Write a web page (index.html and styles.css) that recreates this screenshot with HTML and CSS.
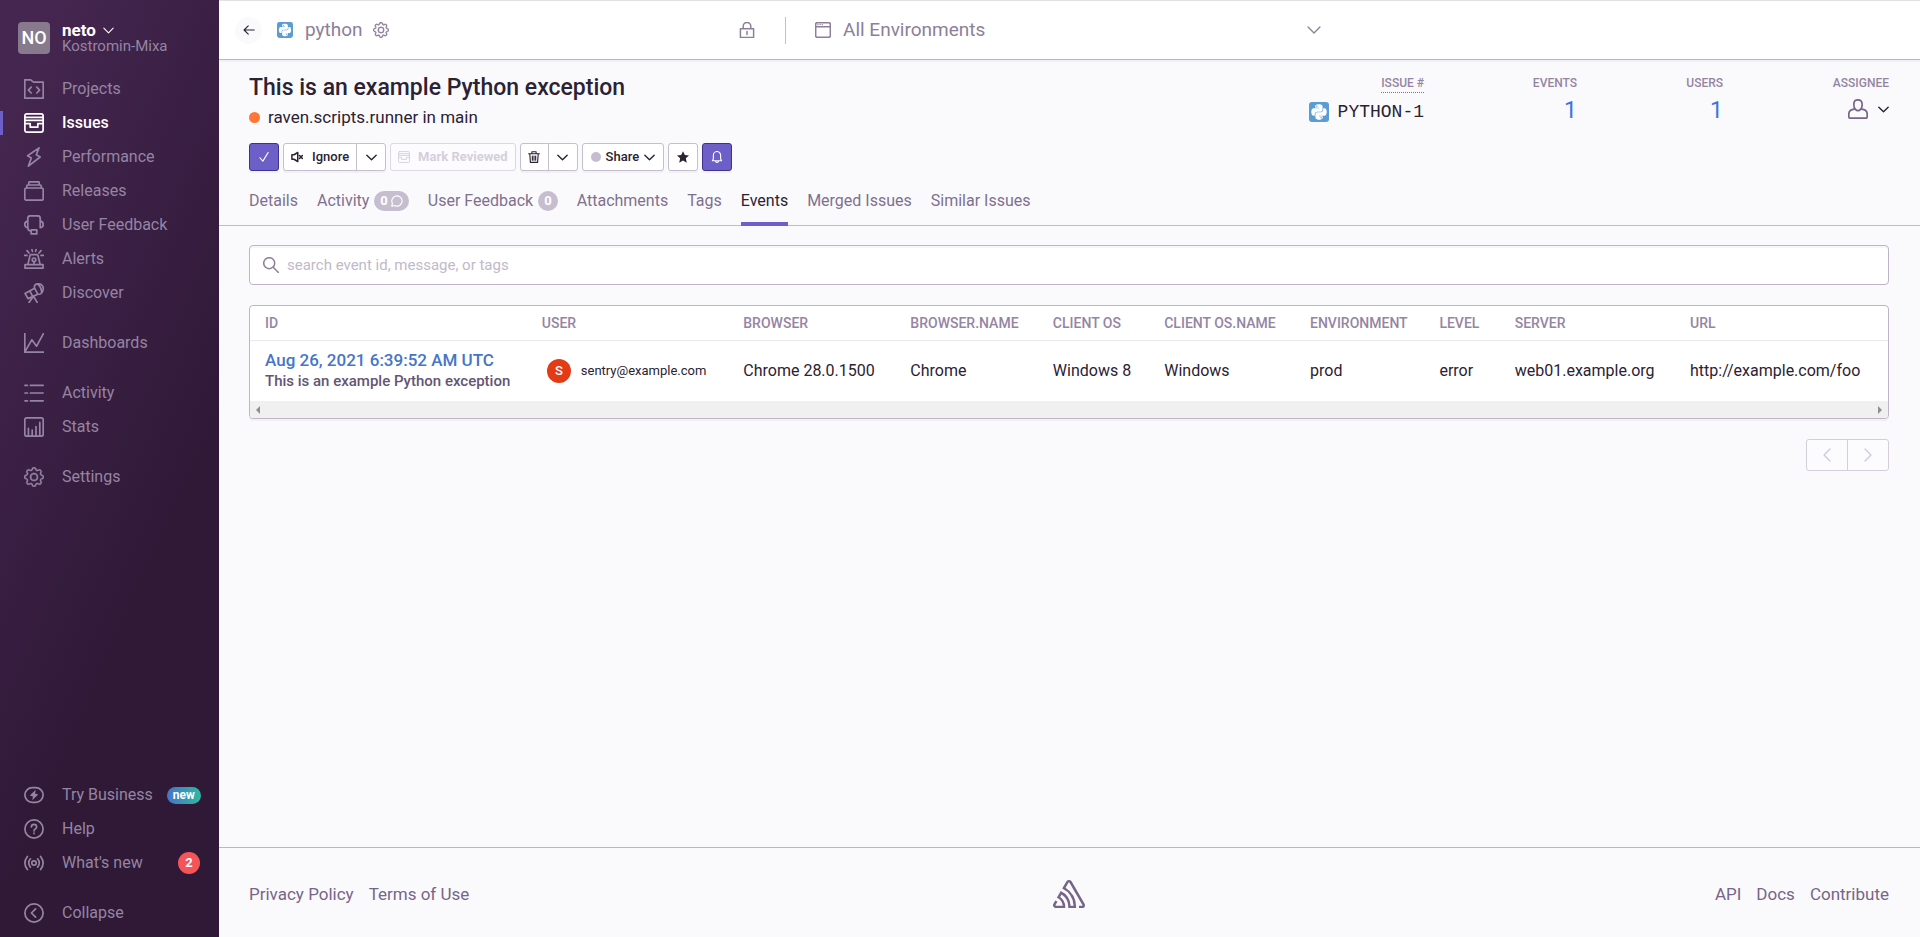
FILE: index.html
```html
<!DOCTYPE html>
<html lang="en">
<head>
<meta charset="utf-8">
<title>This is an example Python exception</title>
<link rel="stylesheet" href="styles.css">
</head>
<body>
<svg class="sprite" aria-hidden="true">
  <symbol id="i-chevron" viewBox="0 0 16 16"><path d="M1.200 4.600L8 11.400l6.800-6.800"/></symbol>
  <symbol id="i-projects" viewBox="0 0 20 20"><path d="M.8 19.2V.8h5.8l3 2.4h9.6v16zM7.2 8.2l-2.8 2.9 2.8 2.9M12.8 8.2l2.8 2.9-2.8 2.9"/></symbol>
  <symbol id="i-issues" viewBox="0 0 20 20"><rect x=".9" y=".9" width="18.2" height="18.2" rx="2"/><path d="M1 4.4h18M1 7.4h18M1 10.6h5.2v3.6h7.6v-3.6H19"/></symbol>
  <symbol id="i-bolt" viewBox="0 0 20 20"><path d="M15 .9L3.6 8.8l3.7 2.2-2.9 8.1L16.2 10l-3.9-2.2z"/></symbol>
  <symbol id="i-releases" viewBox="0 0 20 20"><rect x=".8" y="7" width="18.4" height="12.2" rx="1.5"/><path d="M2.8 7V4.8q0-.8.8-.8h12.8q.8 0 .8.8V7M4.8 4V1.6q0-.8.8-.8h8.8q.8 0 .8.8V4"/></symbol>
  <symbol id="i-headset" viewBox="0 0 20 20"><path d="M3.8 12.6V3.3Q3.8.8 6.3.8h7.4q2.5 0 2.5 2.5v9.3M3.8 6.2Q.8 6.4.8 9.4t3 3.2zM16.2 6.2q3 .2 3 3.2t-3 3.2zM3.800 12.600q0 3.400 3.200 3.400M7.200 14.900h5.600v4H7.200z"/></symbol>
  <symbol id="i-siren" viewBox="0 0 20 20"><path d="M1 19.2v-3.6h18v3.6zM3.8 15.6L6 6.6q.2-1 1-1h6q.8 0 1 1l2.2 9M0 6.4h3M17 6.4h3M3 1.6l2 2.4M17 1.6L15 4M7.8 0l.6 2.4M12.2 0l-.6 2.4"/><circle cx="10" cy="10.8" r="1.8"/><path d="M10 12.6v3"/></symbol>
  <symbol id="i-scope" viewBox="0 0 20 20"><path d="M1 10.400l9.600-5.200 3.200 6-9.800 4.400zM10.600 5.200q-.8-2 .8-3.600Q14 .2 17 1.400q2.600 1.400 2.200 5-.6 3.600-3 4.600-1.600.4-2.400.2M13.600 1q3.400 2.400 4.200 8.400M9.400 13.200L5 19.400M9.400 13.200l3.800 6.200M5.800 7.800l3 5.800"/></symbol>
  <symbol id="i-graph" viewBox="0 0 20 20"><path d="M.8 0v19.2H20M1 18.6L7.8 6.8l4.8 6.4L19.4.6"/></symbol>
  <symbol id="i-list" viewBox="0 0 20 20"><path d="M1 2.4h2.400M6.400 2.400h12.800M1 10h2.400M6.400 10h12.800M1 17.800h2.400M6.400 17.800h12.800"/></symbol>
  <symbol id="i-stats" viewBox="0 0 20 20"><rect x=".8" y=".8" width="18.4" height="18.4" rx="2"/><path d="M4.4 11.4V19M8.2 13V19M12 9.6V19M15.8 5.4V19"/></symbol>
  <symbol id="i-gear" viewBox="0 0 16 16"><path d="M8 4.754a3.246 3.246 0 1 0 0 6.492 3.246 3.246 0 0 0 0-6.492zM5.754 8a2.246 2.246 0 1 1 4.492 0 2.246 2.246 0 0 1-4.492 0z"/><path d="M9.796 1.343c-.527-1.79-3.065-1.79-3.592 0l-.094.319a.873.873 0 0 1-1.255.52l-.292-.16c-1.64-.892-3.433.902-2.54 2.541l.159.292a.873.873 0 0 1-.52 1.255l-.319.094c-1.79.527-1.79 3.065 0 3.592l.319.094a.873.873 0 0 1 .52 1.255l-.16.292c-.892 1.64.901 3.434 2.541 2.54l.292-.159a.873.873 0 0 1 1.255.52l.094.319c.527 1.79 3.065 1.79 3.592 0l.094-.319a.873.873 0 0 1 1.255-.52l.292.16c1.64.893 3.434-.902 2.54-2.541l-.159-.292a.873.873 0 0 1 .52-1.255l.319-.094c1.79-.527 1.79-3.065 0-3.592l-.319-.094a.873.873 0 0 1-.52-1.255l.16-.292c.893-1.64-.902-3.433-2.541-2.54l-.292.159a.873.873 0 0 1-1.255-.52l-.094-.319zm-2.633.283c.246-.835 1.428-.835 1.674 0l.094.319a1.873 1.873 0 0 0 2.693 1.115l.291-.16c.764-.415 1.6.42 1.184 1.185l-.159.292a1.873 1.873 0 0 0 1.116 2.692l.318.094c.835.246.835 1.428 0 1.674l-.319.094a1.873 1.873 0 0 0-1.115 2.693l.16.291c.415.764-.42 1.6-1.185 1.184l-.291-.159a1.873 1.873 0 0 0-2.693 1.116l-.094.318c-.246.835-1.428.835-1.674 0l-.094-.319a1.873 1.873 0 0 0-2.692-1.115l-.292.16c-.764.415-1.6-.42-1.184-1.185l.159-.291A1.873 1.873 0 0 0 1.945 8.93l-.319-.094c-.835-.246-.835-1.428 0-1.674l.319-.094A1.873 1.873 0 0 0 3.06 4.377l-.16-.292c-.415-.764.42-1.6 1.185-1.184l.292.159a1.873 1.873 0 0 0 2.692-1.115l.094-.319z"/></symbol>
  <symbol id="i-business" viewBox="0 0 20 20"><rect x=".9" y="2.7" width="18.2" height="14.6" rx="7.3"/><path class="solid" d="M11.8 4.8L5.8 10.6l3.2.8-.8 3.8 6-5.8-3.2-.8z"/></symbol>
  <symbol id="i-help" viewBox="0 0 20 20"><circle cx="10" cy="10" r="9.1"/><path d="M7.400 8q0-2.600 2.600-2.600T12.600 8q0 1.300-1.300 2Q10 10.700 10 12M10 14.200v.4"/></symbol>
  <symbol id="i-broadcast" viewBox="0 0 20 20"><circle cx="10" cy="10" r="2.200"/><path d="M6.400 5.800q-3.400 4.200 0 8.400M13.600 5.800q3.400 4.200 0 8.400M3.400 3.400q-5 6.600 0 13.200M16.600 3.400q5 6.600 0 13.200"/></symbol>
  <symbol id="i-collapse" viewBox="0 0 20 20"><circle cx="10" cy="10" r="9.1"/><path d="M11.600 5.800L7.400 10l4.200 4.200"/></symbol>
  <symbol id="i-back" viewBox="0 0 16 16"><path d="M15 8H1.500M7 2.400L1.400 8 7 13.600"/></symbol>
  <symbol id="i-python" viewBox="0 0 20 20"><rect class="py-bg" width="20" height="20" rx="3"/><path class="py-fg" transform="translate(2.300 1.200) scale(.0344)" d="M439.800 200.500c-7.700-30.900-22.300-54.200-53.400-54.200h-40.100v47.400c0 36.800-31.200 67.800-66.800 67.800H172.700c-29.200 0-53.400 25-53.400 54.300v101.800c0 29 25.200 46 53.400 54.300 33.800 9.900 66.300 11.700 106.800 0 26.900-7.800 53.400-23.500 53.400-54.300v-40.700H226.200v-13.600h160.200c31.100 0 42.600-21.700 53.400-54.200 11.200-33.500 10.700-65.700 0-108.600zM286.200 404c11.100 0 20.100 9.100 20.100 20.300 0 11.300-9 20.400-20.100 20.400-11 0-20.100-9.200-20.100-20.400.1-11.300 9.100-20.300 20.100-20.300zM167.800 248.100h106.800c29.700 0 53.400-24.500 53.400-54.300V91.900c0-29-24.400-50.700-53.400-55.600-35.800-5.900-74.700-5.600-106.800.1-45.200 8-53.400 24.700-53.400 55.600v40.700h106.900v13.600h-147c-31.100 0-58.300 18.700-66.800 54.200-9.800 40.700-10.200 66.100 0 108.600 7.600 31.600 25.700 54.200 56.800 54.200H101v-48.800c0-35.300 30.500-66.400 66.800-66.400zm-6.700-142.600c-11.100 0-20.100-9.100-20.100-20.300.1-11.300 9-20.400 20.100-20.400 11 0 20.100 9.200 20.100 20.400s-9 20.300-20.100 20.300z"/></symbol>
  <symbol id="i-lock" viewBox="0 0 16 16"><path d="M1.400 6.800h13.200v8.600H1.400zM4.200 6.800V4.200a3.800 3.800 0 0 1 7.600 0v2.600M8 9.400v3"/></symbol>
  <symbol id="i-window" viewBox="0 0 16 16"><rect x=".7" y=".7" width="14.600" height="14.600" rx="1.500"/><path d="M.8 4.700h14.400"/><path class="dots" d="M2.600 2.700h.6M4.800 2.700h.6M7 2.700h.6"/></symbol>
  <symbol id="i-check" viewBox="0 0 16 16"><path d="M2.500 9l4 4.500 7-11.500"/></symbol>
  <symbol id="i-mute" viewBox="0 0 16 16"><path d="M4 5H1.200v6H4l5 3V2zM11.400 6l3.800 4M15.200 6l-3.800 4"/></symbol>
  <symbol id="i-trash" viewBox="0 0 16 16"><path d="M.8 3.600h14.400M5.200 3.400V1h5.600v2.400M2.400 3.600l.8 11.600h9.600l.8-11.600M5.800 6.600v5.800M8 6.600v5.800M10.200 6.600v5.800"/></symbol>
  <symbol id="i-star" viewBox="0 0 16 16"><path d="M8 .2l2.400 5.200 5.600.6-4.200 3.800 1.200 5.800-5-2.900-5 2.900 1.200-5.800L0 6l5.600-.6z"/></symbol>
  <symbol id="i-bell" viewBox="0 0 16 16"><path d="M1.800 13h12.400q-1.400-1.600-1.400-3.400V5.500a4.800 4.800 0 0 0-9.600 0v4.100q0 1.800-1.400 3.400zM6 13.200a2 2 0 0 0 4 0"/></symbol>
  <symbol id="i-bubble" viewBox="0 0 16 16"><path d="M8 1.200a6.800 6.800 0 1 1-3.200 12.800L1 15l.9-3.800A6.800 6.800 0 0 1 8 1.200z"/></symbol>
  <symbol id="i-user" viewBox="0 0 20 20"><path d="M7.500 10.400Q5.800 9 5.800 5.500 5.800.8 10 .8t4.200 4.700q0 3.500-1.700 4.900-1 1.200-2.500 1.200t-2.500-1.200zM6.400 10.200Q.8 10.800.8 15v2.700q0 1.500 1.500 1.500h15.400q1.500 0 1.500-1.500V15q0-4.200-5.600-4.800"/></symbol>
  <symbol id="i-search" viewBox="0 0 16 16"><circle cx="6.200" cy="6.200" r="5.500"/><path d="M10.200 10.200l5.300 5.300"/></symbol>
  <symbol id="i-sentry" viewBox="0 0 50 44"><path d="M29,2.260a4.670,4.670,0,0,0-8,0L14.420,13.530A32.210,32.210,0,0,1,32.170,40.190H27.550A27.680,27.680,0,0,0,12.090,17.470L6,28a15.920,15.920,0,0,1,9.230,12.170H4.620A.76.76,0,0,1,4,39.060l2.940-5a10.740,10.740,0,0,0-3.360-1.900l-2.910,5a4.540,4.540,0,0,0,1.690,6.240A4.660,4.660,0,0,0,4.620,44H19.150a19.400,19.400,0,0,0-8-17.310l2.310-4A23.870,23.870,0,0,1,23.760,44H36.070a35.880,35.880,0,0,0-16.410-31.800l4.670-8a.77.77,0,0,1,1.050-.27c.53.29,20.290,34.770,20.660,35.170a.76.76,0,0,1-.68,1.130H40.600q.09,1.910,0,3.810h4.780A4.590,4.590,0,0,0,50,39.430a4.490,4.490,0,0,0-.62-2.280Z"/></symbol>
</svg>

<div class="app">
  <aside class="sidebar">
    <button class="org" type="button">
      <span class="org-avatar">NO</span>
      <span class="org-text">
        <span class="org-name">neto <svg class="ico ico-10"><use href="#i-chevron"/></svg></span>
        <span class="org-user">Kostromin-Mixa</span>
      </span>
    </button>
    <nav class="nav">
      <a class="nav-item" href="#"><svg class="ico ico-20"><use href="#i-projects"/></svg>Projects</a>
      <a class="nav-item active" href="#"><svg class="ico ico-20"><use href="#i-issues"/></svg>Issues</a>
      <a class="nav-item" href="#"><svg class="ico ico-20"><use href="#i-bolt"/></svg>Performance</a>
      <a class="nav-item" href="#"><svg class="ico ico-20"><use href="#i-releases"/></svg>Releases</a>
      <a class="nav-item" href="#"><svg class="ico ico-20"><use href="#i-headset"/></svg>User Feedback</a>
      <a class="nav-item" href="#"><svg class="ico ico-20"><use href="#i-siren"/></svg>Alerts</a>
      <a class="nav-item" href="#"><svg class="ico ico-20"><use href="#i-scope"/></svg>Discover</a>
    </nav>
    <nav class="nav">
      <a class="nav-item" href="#"><svg class="ico ico-20"><use href="#i-graph"/></svg>Dashboards</a>
    </nav>
    <nav class="nav">
      <a class="nav-item" href="#"><svg class="ico ico-20"><use href="#i-list"/></svg>Activity</a>
      <a class="nav-item" href="#"><svg class="ico ico-20"><use href="#i-stats"/></svg>Stats</a>
    </nav>
    <nav class="nav">
      <a class="nav-item" href="#"><svg class="ico ico-20 gear"><use href="#i-gear"/></svg>Settings</a>
    </nav>
    <nav class="nav nav-bottom">
      <a class="nav-item" href="#"><svg class="ico ico-20"><use href="#i-business"/></svg>Try Business<span class="tag-new">new</span></a>
      <a class="nav-item" href="#"><svg class="ico ico-20"><use href="#i-help"/></svg>Help</a>
      <a class="nav-item" href="#"><svg class="ico ico-20"><use href="#i-broadcast"/></svg>What's new<span class="tag-count">2</span></a>
    </nav>
    <nav class="nav">
      <button class="nav-item" type="button"><svg class="ico ico-20"><use href="#i-collapse"/></svg>Collapse</button>
    </nav>
  </aside>

  <div class="page">
    <header class="topbar">
      <div class="project">
        <a class="back" href="#" aria-label="Back"><svg class="ico ico-12"><use href="#i-back"/></svg></a>
        <svg class="ico ico-16"><use href="#i-python"/></svg>
        <span class="project-name">python</span>
        <a class="project-settings" href="#" aria-label="Project settings"><svg class="ico ico-16 gear"><use href="#i-gear"/></svg></a>
        <svg class="ico ico-16 lock"><use href="#i-lock"/></svg>
      </div>
      <button class="env" type="button">
        <svg class="ico ico-16"><use href="#i-window"/></svg>
        <span>All Environments</span>
        <svg class="ico ico-14 env-chevron"><use href="#i-chevron"/></svg>
      </button>
    </header>

    <section class="issue">
      <div class="issue-main">
        <h1 class="title">This is an example Python exception</h1>
        <p class="culprit"><span class="level-dot"></span>raven.scripts.runner in main</p>
        <div class="actions">
          <button class="btn btn-primary btn-square" type="button" aria-label="Resolve"><svg class="ico ico-12"><use href="#i-check"/></svg></button>
          <div class="btn-group">
            <button class="btn" type="button"><svg class="ico ico-12 bold"><use href="#i-mute"/></svg>Ignore</button>
            <button class="btn btn-square" type="button" aria-label="Ignore options"><svg class="ico ico-10 bold"><use href="#i-chevron"/></svg></button>
          </div>
          <button class="btn btn-review" type="button" disabled><svg class="ico ico-12"><use href="#i-issues"/></svg>Mark Reviewed</button>
          <div class="btn-group">
            <button class="btn btn-narrow" type="button" aria-label="Delete"><svg class="ico ico-12"><use href="#i-trash"/></svg></button>
            <button class="btn btn-square" type="button" aria-label="Delete options"><svg class="ico ico-10 bold"><use href="#i-chevron"/></svg></button>
          </div>
          <button class="btn btn-share" type="button"><span class="share-dot"></span>Share<svg class="ico ico-10 bold"><use href="#i-chevron"/></svg></button>
          <button class="btn btn-square" type="button" aria-label="Bookmark"><svg class="ico ico-12 filled"><use href="#i-star"/></svg></button>
          <button class="btn btn-primary btn-square" type="button" aria-label="Subscribe"><svg class="ico ico-12"><use href="#i-bell"/></svg></button>
        </div>
      </div>
      <dl class="stats">
        <div class="stat"><dt><span class="hint">ISSUE #</span></dt><dd class="short-id"><svg class="ico ico-20"><use href="#i-python"/></svg>PYTHON-1</dd></div>
        <div class="stat"><dt>EVENTS</dt><dd><a class="count" href="#">1</a></dd></div>
        <div class="stat"><dt>USERS</dt><dd><a class="count" href="#">1</a></dd></div>
        <div class="stat"><dt>ASSIGNEE</dt><dd><button class="assignee" type="button" aria-label="Assign"><svg class="ico ico-20"><use href="#i-user"/></svg><svg class="ico ico-10 bold dark"><use href="#i-chevron"/></svg></button></dd></div>
      </dl>
    </section>

    <nav class="tabs">
      <a class="tab" href="#">Details</a>
      <a class="tab" href="#">Activity<span class="pill">0<svg class="ico ico-12"><use href="#i-bubble"/></svg></span></a>
      <a class="tab" href="#">User Feedback<span class="pill">0</span></a>
      <a class="tab" href="#">Attachments</a>
      <a class="tab" href="#">Tags</a>
      <a class="tab current" href="#">Events</a>
      <a class="tab" href="#">Merged Issues</a>
      <a class="tab" href="#">Similar Issues</a>
    </nav>

    <main class="content">
      <label class="search">
        <svg class="ico ico-16"><use href="#i-search"/></svg>
        <input type="text" aria-label="Search events" placeholder="search event id, message, or tags">
      </label>

      <div class="panel">
        <table class="events">
          <colgroup><col class="c-id"><col class="c-user"><col class="c-browser"><col class="c-bname"><col class="c-os"><col class="c-osname"><col class="c-env"><col class="c-level"><col class="c-server"><col></colgroup>
          <thead>
            <tr><th>ID</th><th>USER</th><th>BROWSER</th><th>BROWSER.NAME</th><th>CLIENT OS</th><th>CLIENT OS.NAME</th><th>ENVIRONMENT</th><th>LEVEL</th><th>SERVER</th><th>URL</th></tr>
          </thead>
          <tbody>
            <tr>
              <td><a class="event-link" href="#">Aug 26, 2021 6:39:52 AM UTC</a><div class="event-title">This is an example Python exception</div></td>
              <td><div class="user"><span class="user-avatar">S</span>sentry@example.com</div></td>
              <td>Chrome 28.0.1500</td><td>Chrome</td><td>Windows 8</td><td>Windows</td><td>prod</td><td>error</td><td>web01.example.org</td><td>http://example.com/foo</td>
            </tr>
          </tbody>
        </table>
        <div class="scrollbar"><span class="arrow-left"></span><span class="arrow-right"></span></div>
      </div>

      <div class="pager">
        <button type="button" disabled aria-label="Previous"><svg class="ico ico-14 turn-left"><use href="#i-chevron"/></svg></button>
        <button type="button" disabled aria-label="Next"><svg class="ico ico-14 turn-right"><use href="#i-chevron"/></svg></button>
      </div>
    </main>

    <footer class="footer">
      <div class="footer-links"><a href="#">Privacy Policy</a><a href="#">Terms of Use</a></div>
      <svg class="ico logo filled"><use href="#i-sentry"/></svg>
      <div class="footer-links footer-right"><a href="#">API</a><a href="#">Docs</a><a href="#">Contribute</a></div>
    </footer>
  </div>
</div>
</body>
</html>
```
FILE: styles.css
```css
* { box-sizing: border-box; }
body { margin: 0; font-family: Roboto, "Liberation Sans", sans-serif; font-size: 16px; line-height: 20px; color: #2b2233; background: #fafafc; }
a { color: inherit; text-decoration: none; }
button { font: inherit; color: inherit; background: none; border: 0; padding: 0; margin: 0; text-align: left; }
dl, dd, p, h1 { margin: 0; }

.sprite { position: absolute; width: 0; height: 0; }
.ico { flex: none; display: block; fill: none; stroke: currentColor; stroke-width: 1.5; stroke-linecap: round; stroke-linejoin: round; }
.ico-10 { width: 11px; height: 11px; }
.ico-12 { width: 12px; height: 12px; }
.ico-14 { width: 14px; height: 14px; }
.ico-16 { width: 16px; height: 16px; }
.ico-20 { width: 20px; height: 20px; stroke-width: 1.7; }
.bold { stroke-width: 2; }
.filled { fill: currentColor; stroke: none; }
.gear { fill: currentColor; stroke-width: .3; }
.solid { fill: currentColor; stroke: none; }
.dots { stroke-width: 1; }
.dark { color: #2b2233; }
.py-bg { fill: #5b9dd0; stroke: none; }
.py-fg { fill: #fff; stroke: none; }

.app { display: flex; min-height: 100vh; }

.sidebar { flex: none; width: 219px; display: flex; flex-direction: column; padding: 22px 0 7px; background: linear-gradient(294.17deg, #2f1937 35.57%, #452650 92.42%); color: #9585a3; }
.org { display: flex; align-items: center; gap: 12px; padding: 0 18px; margin-bottom: 18px; }
.org-avatar { width: 32px; height: 32px; border-radius: 4px; background: #867a8c; color: #fff; font-size: 18px; font-weight: 500; line-height: 32px; text-align: center; }
.org-text { display: flex; flex-direction: column; line-height: 16px; }
.org-name { display: flex; align-items: center; gap: 7px; font-size: 17px; font-weight: 700; color: #fff; }
.org-user { font-size: 15px; }
.nav { display: flex; flex-direction: column; margin-bottom: 16px; }
.nav:last-child { margin-bottom: 0; }
.nav-bottom { margin-top: auto; }
.nav-item { display: flex; align-items: center; gap: 18px; height: 34px; padding: 0 19px 0 24px; white-space: nowrap; }
.nav-item.active { color: #fff; font-weight: 500; background: linear-gradient(#6c5fc7, #6c5fc7) no-repeat left center / 3px 24px; }
.tag-new { margin: 0 0 0 -4px; height: 17px; padding: 0 6px; border-radius: 9px; background: linear-gradient(90deg, #4674ca, #2fb8a0); color: #fff; font-size: 12px; font-weight: 700; line-height: 16px; }
.tag-count { margin-left: auto; width: 22px; height: 22px; border-radius: 50%; background: #f55459; color: #fff; font-size: 13px; font-weight: 700; line-height: 22px; text-align: center; }

.page { flex: 1; min-width: 0; display: flex; flex-direction: column; }

.topbar { display: grid; grid-template-columns: repeat(3, 1fr); align-items: center; height: 60px; border-top: 1px solid #e2e0e5; border-bottom: 1px solid #bdb4c7; background: #fff; box-shadow: 0 2px 0 rgba(37, 11, 54, .04); color: #8c7f9a; font-size: 19px; }
.project { display: flex; align-items: center; padding: 0 30px 0 16px; height: 27px; border-right: 1px solid #c6becf; }
.back { display: grid; place-items: center; width: 27px; height: 27px; margin-right: 15px; border-radius: 50%; background: #fafafc; color: #2b2233; }
.project-name { margin: 0 10px 0 12px; }
.lock { margin-left: auto; }
.env { display: flex; align-items: center; gap: 12px; padding: 0 32px 0 29px; }
.env-chevron { margin-left: auto; }

.issue { display: flex; justify-content: space-between; padding: 14px 31px 0 30px; }
.title { font-size: 23px; font-weight: 500; line-height: 28px; }
.culprit { display: flex; align-items: center; gap: 8px; margin-top: 5px; font-size: 17px; }
.level-dot { width: 11px; height: 11px; border-radius: 50%; background: #ff7738; }
.actions { display: flex; gap: 4px; margin-top: 16px; }
.btn { display: flex; align-items: center; justify-content: center; gap: 9px; height: 28px; padding: 0 7px; border: 1px solid #c6becf; border-radius: 3px; background: #fff; box-shadow: 0 2px 0 rgba(37, 11, 54, .04); font-size: 13px; font-weight: 500; }
.btn-group { display: flex; }
.btn-group .btn:first-child { border-radius: 3px 0 0 3px; }
.btn-group .btn:last-child { margin-left: -1px; border-radius: 0 3px 3px 0; }
.btn-square { width: 30px; padding: 0; }
.btn-narrow { width: 29px; padding: 0; }
.btn-primary { background: #6c5fc7; border-color: #3d328e; color: #fff; }
.btn-review { gap: 8px; border-color: #dcd7e2; box-shadow: none; background: #fcfcfe; color: #d5cfdc; font-weight: 700; }
.btn-share { gap: 5px; padding: 0 8px; }
.share-dot { width: 10px; height: 10px; border-radius: 50%; background: #c6becf; }

.stats { display: grid; grid-template-columns: auto 153px 146px 166px; }
.stat { display: flex; flex-direction: column; align-items: flex-end; }
.stat dt { font-size: 12px; font-weight: 500; line-height: 18px; color: #9585a3; }
.stat dd { display: flex; align-items: center; height: 38px; }
.hint { display: block; border-bottom: 1px dotted #80708f; }
.stat .short-id { gap: 9px; font-family: "Liberation Mono", monospace; font-size: 18px; }
.count { color: #3d74db; font-size: 23px; line-height: 28px; }
.stat .assignee { display: flex; align-items: center; gap: 10px; margin-bottom: 4px; color: #776589; }

.tabs { display: flex; gap: 19px; margin-top: 9px; padding: 0 30px; border-bottom: 1px solid #c1bacb; }
.tab { display: flex; align-items: center; gap: 5px; height: 46px; margin-bottom: -1px; border-bottom: 4px solid transparent; color: #80708f; }
.tab.current { color: #2b2233; border-bottom-color: #6c5fc7; }
.pill { display: flex; align-items: center; gap: 3px; height: 20px; padding: 0 6px; border-radius: 10px; background: #c6becf; color: #fff; font-size: 13px; font-weight: 700; }

.content { flex: 1; padding: 19px 31px 20px 30px; }
.search { display: flex; align-items: center; gap: 8px; height: 40px; padding: 0 13px; border: 1px solid #bdb4c7; border-radius: 4px; background: #fff; box-shadow: inset 0 2px 0 rgba(37, 11, 54, .04); color: #8c7f9a; }
.search input { flex: 1; min-width: 0; border: 0; padding: 0; outline: 0; background: none; font: inherit; font-size: 15px; color: #2b2233; }
.search input::placeholder { color: #c1b9ca; opacity: 1; }

.panel { margin-top: 20px; border: 1px solid #bdb4c7; border-radius: 4px; background: #fff; box-shadow: 0 2px 0 rgba(37, 11, 54, .04); overflow: hidden; }
.events { width: 100%; table-layout: fixed; border-collapse: collapse; }
.events th, .events td { padding: 0 15px; text-align: left; white-space: nowrap; }
.events th { height: 34px; border-bottom: 1px solid #ebe8ef; color: #9585a3; font-size: 14px; font-weight: 500; }
.events td { height: 61px; }
.c-id { width: 16.9%; }
.c-user { width: 12.3%; }
.c-browser { width: 10.2%; }
.c-bname { width: 8.7%; }
.c-os { width: 6.8%; }
.c-osname { width: 8.9%; }
.c-env { width: 7.9%; }
.c-level { width: 4.6%; }
.c-server { width: 10.7%; }
.event-link { color: #4674ca; font-size: 17px; font-weight: 500; }
.event-title { color: #645574; font-size: 15px; font-weight: 500; }
.user { display: flex; align-items: center; gap: 10px; padding-left: 5px; font-size: 13px; }
.user-avatar { width: 24px; height: 24px; border-radius: 50%; background: #e33b16; color: #fff; font-weight: 500; line-height: 24px; text-align: center; }
.scrollbar { display: flex; justify-content: space-between; align-items: center; height: 17px; padding: 0 6px; background: #f0f0f0; }
.arrow-left, .arrow-right { border: 4px solid transparent; }
.arrow-left { border-left-width: 0; border-right-color: #8f8f8f; }
.arrow-right { border-right-width: 0; border-left-color: #8f8f8f; }

.pager { display: flex; justify-content: flex-end; margin-top: 20px; }
.pager button { display: grid; place-items: center; width: 42px; height: 32px; border: 1px solid #d4cedb; background: #fcfcfe; color: #d0c9d8; }
.pager button:first-child { border-radius: 3px 0 0 3px; }
.pager button:last-child { margin-left: -1px; border-radius: 0 3px 3px 0; }
.turn-left { transform: rotate(90deg); }
.turn-right { transform: rotate(-90deg); }

.footer { display: grid; grid-template-columns: 1fr auto 1fr; align-items: center; height: 90px; padding: 2px 31px 0 30px; border-top: 1px solid #bdb4c7; color: #776589; }
.footer-links { display: flex; gap: 15px; font-size: 17px; }
.footer-right { justify-content: flex-end; }
.logo { width: 32px; height: 30px; }
```
